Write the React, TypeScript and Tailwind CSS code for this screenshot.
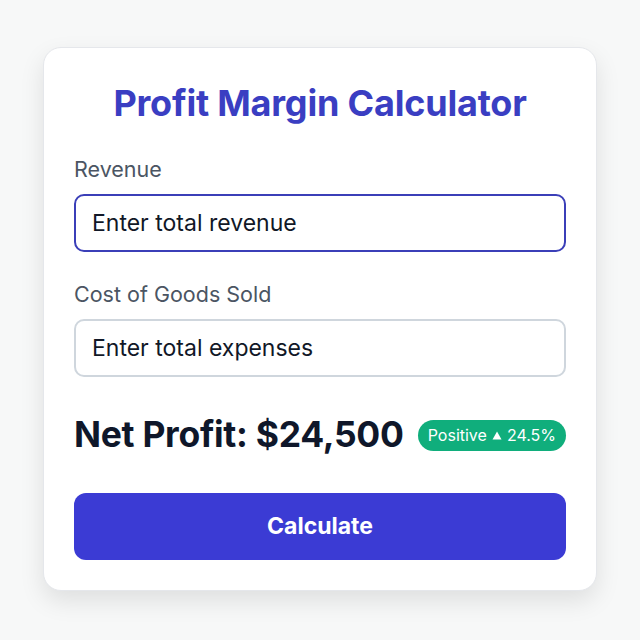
import { useState } from 'react'

export default function App() {
  const [revenue, setRevenue] = useState('')
  const [cogs, setCogs] = useState('')

  return (
    <div
      className="min-h-screen w-full bg-[#f7f8f8] pt-[47px]"
      style={{ fontFamily: 'Inter, "Noto Sans", sans-serif' }}
    >
      <div className="mx-auto w-[554px] rounded-[18px] border border-[#e5e7eb] bg-white px-[30px] pt-[35px] pb-[30px] shadow-[0_10px_24px_rgba(0,0,0,0.10)]">
        {/* Title */}
        <h1 className="text-center text-[36px] leading-[40px] font-bold tracking-[-0.2px] text-[#3a3ec2]">
          Profit Margin Calculator
        </h1>

        {/* Revenue */}
        <label className="mt-[32px] block text-[21.5px] leading-[28px] text-[#4b5563]">Revenue</label>
        <input
          value={revenue}
          onChange={(e) => setRevenue(e.target.value)}
          placeholder="Enter total revenue"
          className="mt-[11px] block h-[58px] w-full rounded-[10px] border-2 border-[#3b3fb8] bg-white px-[16px] text-[23px] text-[#111827] outline-none placeholder:text-[#111827]"
        />

        {/* Cost of goods */}
        <label className="mt-[28px] block text-[21.5px] leading-[28px] text-[#4b5563]">Cost of Goods Sold</label>
        <input
          value={cogs}
          onChange={(e) => setCogs(e.target.value)}
          placeholder="Enter total expenses"
          className="mt-[11px] block h-[58px] w-full rounded-[10px] border-2 border-[#cfd6dd] bg-white px-[16px] text-[23px] text-[#111827] outline-none placeholder:text-[#111827]"
        />

        {/* Result */}
        <div className="mt-[38px] flex items-center justify-between">
          <span className="text-[35.5px] leading-[40px] font-bold tracking-[-0.3px] text-[#0f172a]">
            Net Profit: $24,500
          </span>
          <span className="flex h-[31px] items-center gap-[5px] rounded-full bg-[#10ae7c] px-[10px] text-[16px] text-white">
            Positive
            <svg width="10" height="9" viewBox="0 0 10 9">
              <path d="M5 0.5 L9.5 8.5 L0.5 8.5 Z" fill="white" />
            </svg>
            24.5%
          </span>
        </div>

        {/* Button */}
        <button className="mt-[38px] h-[67px] w-full rounded-[12px] bg-[#3b3bd4] text-[23px] font-bold text-white">
          Calculate
        </button>
      </div>
    </div>
  )
}
